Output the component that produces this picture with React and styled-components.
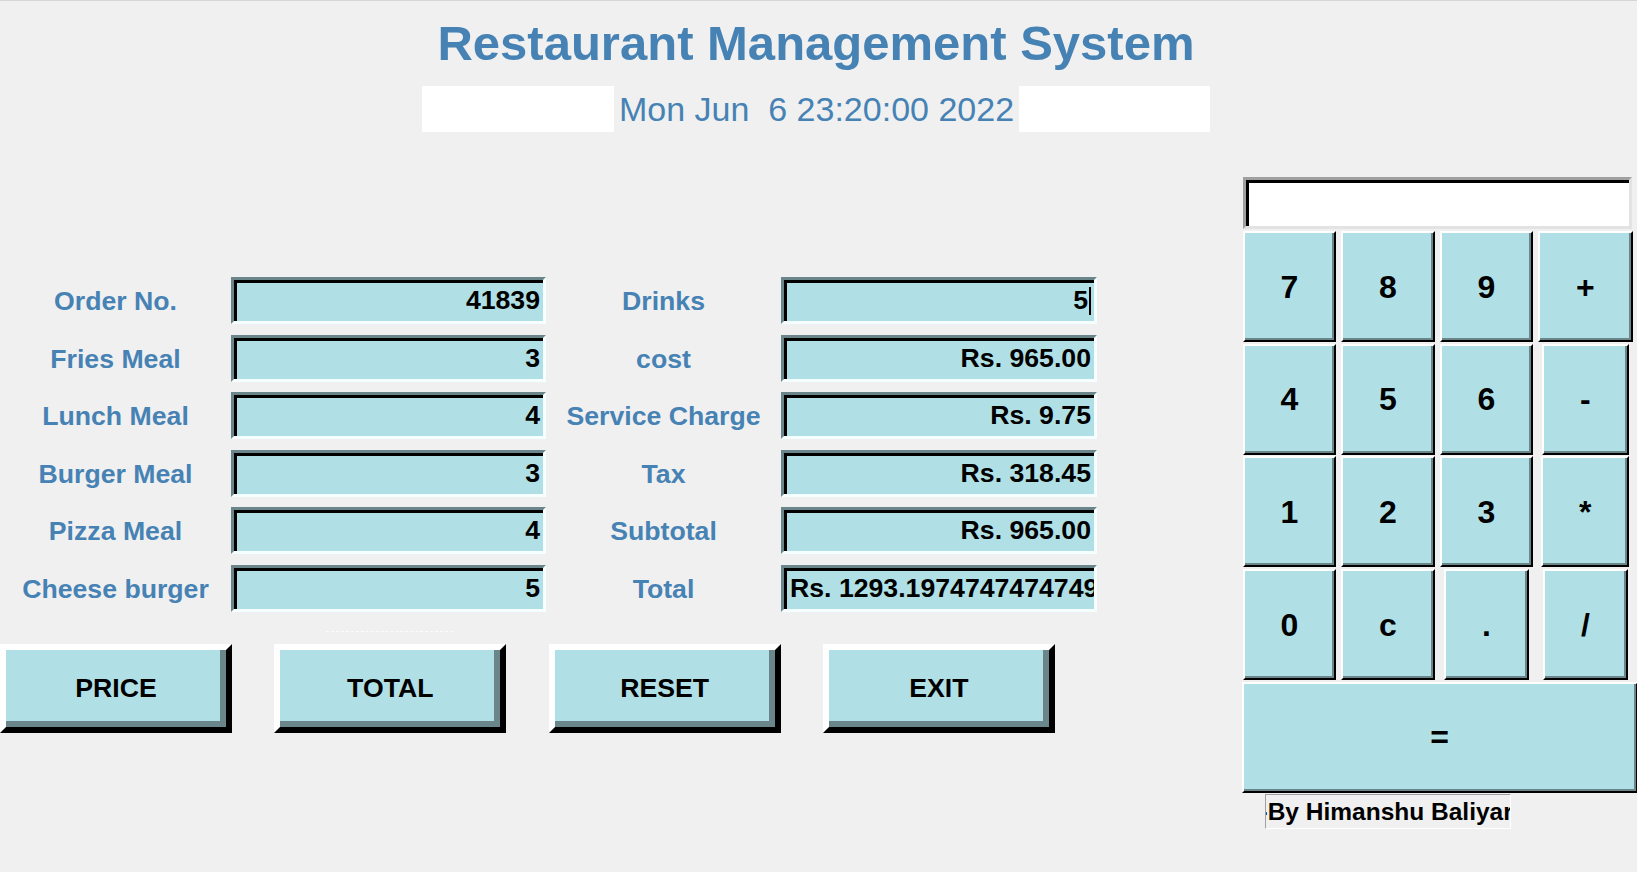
import React from 'react';
import styled, { createGlobalStyle } from 'styled-components';

const FONT = '"Liberation Sans", Arial, Helvetica, sans-serif';
const POWDER = '#b0e0e6';
const DARK = '#6a868a';
const LIGHT = '#f6ffff';
const STEEL = '#4682b4';

const GlobalStyle = createGlobalStyle`
  html, body {
    margin: 0;
    padding: 0;
    background: #f0f0f0;
    overflow: hidden;
  }
  body {
    font-family: ${FONT};
  }
  * { box-sizing: border-box; }
`;

const Page = styled.div`
  width: 1637px;
  height: 872px;
  border-top: 1px solid #d6d6d6;
  background: #f0f0f0;
  display: flex;
  flex-direction: column;
  font-family: ${FONT};
`;

const Header = styled.header`
  display: flex;
  flex-direction: column;
  align-items: center;
  padding: 13.5px 5px 0 0;
`;

const Title = styled.h1`
  margin: 0;
  font: bold 49px/56px ${FONT};
  color: ${STEEL};
  white-space: nowrap;
`;

const DateRow = styled.div`
  display: flex;
  align-items: stretch;
  height: 46px;
  margin-top: 15.5px;
`;

const WhiteBlock = styled.div`
  width: ${(p) => p.$w}px;
  background: #ffffff;
`;

const DateText = styled.div`
  font: 34px/46px ${FONT};
  color: ${STEEL};
  padding: 0 5px;
  white-space: pre;
`;

const Main = styled.main`
  display: flex;
  align-items: flex-start;
  margin-top: 45px;
`;

const LeftPanel = styled.section`
  width: 1097px;
  padding-top: 100px;
  display: flex;
  flex-direction: column;
`;

const FormGrid = styled.div`
  display: grid;
  grid-template-columns: 231px 315px 235px 316px;
  grid-auto-rows: 47px;
  row-gap: 10.5px;
  align-items: center;
`;

const FieldLabel = styled.div`
  justify-self: center;
  text-align: center;
  font: bold 26.67px/1 ${FONT};
  color: ${STEEL};
  white-space: nowrap;
  padding-top: 2px;
`;

const Field = styled.div`
  height: 47px;
  border: 3px solid;
  border-color: ${DARK} ${LIGHT} ${LIGHT} ${DARK};
  box-shadow: inset 3px 3px 0 #000;
  background: ${POWDER};
  padding: 0 3px 0 6px;
  display: flex;
  align-items: center;
  justify-content: ${(p) => (p.$left ? 'flex-start' : 'flex-end')};
  overflow: hidden;
  white-space: nowrap;
  font: bold 26.67px/1 ${FONT};
  color: #000;
`;

const Caret = styled.span`
  display: inline-block;
  width: 2px;
  height: 28px;
  margin-left: 1px;
  background: #000;
`;

const FocusMark = styled.div`
  margin: 19.5px 0 0 326px;
  width: 127px;
  border-top: 1px dashed #fbfbfb;
`;

const ActionRow = styled.div`
  display: flex;
  gap: 42.3px;
  margin-top: 12px;
`;

const ActionButton = styled.button`
  width: 232px;
  height: 89px;
  padding: 0;
  border: 6px solid;
  border-color: #ffffff #000000 #000000 #ffffff;
  box-shadow: inset -6px -6px 0 ${DARK};
  background: ${POWDER};
  font: bold 26.67px/1 ${FONT};
  color: #000;
  cursor: pointer;
`;

const CalcPanel = styled.aside`
  margin-left: auto;
  width: 396.8px;
  display: flex;
  flex-direction: column;
`;

const CalcDisplay = styled.div`
  margin-left: 2.8px;
  width: 389px;
  height: 51.5px;
  border: 3px solid;
  border-color: #a0a0a0 #e3e3e3 #e3e3e3 #a0a0a0;
  box-shadow: inset 3px 3px 0 #000;
  background: #ffffff;
`;

const KeyGrid = styled.div`
  display: grid;
  grid-template-columns: repeat(4, auto);
  justify-content: start;
  row-gap: 1.7px;
  margin-top: 2.5px;
`;

const KeyCell = styled.div`
  display: flex;
  justify-content: center;
  padding: 0 2.5px;
`;

const Key = styled.button`
  height: 111px;
  padding: 0 35.85px;
  border: 2px solid;
  border-color: #ffffff #000000 #000000 #ffffff;
  box-shadow: inset -2px -2px 0 ${DARK};
  background: ${POWDER};
  font: bold 32px/1 ${FONT};
  color: #000;
  cursor: pointer;
`;

const EqualsKey = styled(Key)`
  width: 396px;
  padding: 0;
  margin: 1.7px 0 0 1.5px;
`;

const Credit = styled.div`
  margin: 1.3px 0 0 24.8px;
  width: 246px;
  height: 35px;
  border: 1px solid;
  border-color: #a0a0a0 #ffffff #ffffff #a0a0a0;
  overflow: hidden;
  white-space: nowrap;
  text-indent: -6.5px;
  font: bold 24.5px/33px ${FONT};
  color: #000;
`;

const leftRows = [
  ['Order No.', '41839'],
  ['Fries Meal', '3'],
  ['Lunch Meal', '4'],
  ['Burger Meal', '3'],
  ['Pizza Meal', '4'],
  ['Cheese burger', '5'],
];

const rightRows = [
  ['Drinks', '5', 'caret'],
  ['cost', 'Rs. 965.00'],
  ['Service Charge', 'Rs. 9.75'],
  ['Tax', 'Rs. 318.45'],
  ['Subtotal', 'Rs. 965.00'],
  ['Total', 'Rs. 1293.1974747474749', 'left'],
];

const keys = ['7', '8', '9', '+', '4', '5', '6', '-', '1', '2', '3', '*', '0', 'c', '.', '/'];

export default function App() {
  return (
    <>
      <GlobalStyle />
      <Page>
        <Header>
          <Title>Restaurant Management System</Title>
          <DateRow>
            <WhiteBlock $w={192} />
            <DateText>{'Mon Jun  6 23:20:00 2022'}</DateText>
            <WhiteBlock $w={191} />
          </DateRow>
        </Header>
        <Main>
          <LeftPanel>
            <FormGrid>
              {leftRows.map((row, i) => (
                <React.Fragment key={row[0]}>
                  <FieldLabel>{row[0]}</FieldLabel>
                  <Field>{row[1]}</Field>
                  <FieldLabel>{rightRows[i][0]}</FieldLabel>
                  <Field $left={rightRows[i][2] === 'left'}>
                    {rightRows[i][1]}
                    {rightRows[i][2] === 'caret' && <Caret />}
                  </Field>
                </React.Fragment>
              ))}
            </FormGrid>
            <FocusMark />
            <ActionRow>
              <ActionButton>PRICE</ActionButton>
              <ActionButton>TOTAL</ActionButton>
              <ActionButton>RESET</ActionButton>
              <ActionButton>EXIT</ActionButton>
            </ActionRow>
          </LeftPanel>
          <CalcPanel>
            <CalcDisplay />
            <KeyGrid>
              {keys.map((k) => (
                <KeyCell key={k}>
                  <Key>{k}</Key>
                </KeyCell>
              ))}
            </KeyGrid>
            <EqualsKey>=</EqualsKey>
            <Credit>-By Himanshu Baliyar</Credit>
          </CalcPanel>
        </Main>
      </Page>
    </>
  );
}
